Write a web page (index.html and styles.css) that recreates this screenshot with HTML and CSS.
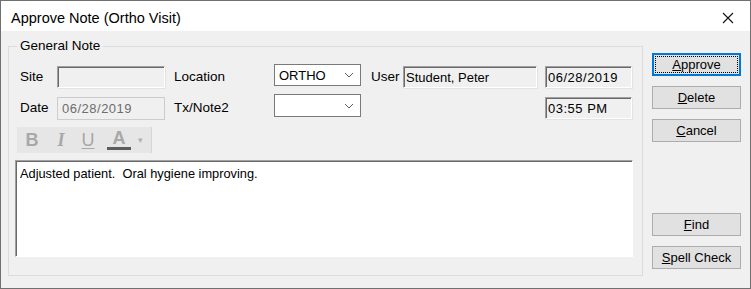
FILE: index.html
```html
<!DOCTYPE html>
<html lang="en">
<head>
    <meta charset="UTF-8">
    <title>Approve Note (Ortho Visit)</title>
    <link rel="stylesheet" href="styles.css">
</head>
<body>
    <div class="window">
        <div class="titlebar">
            <span class="title">Approve Note (Ortho Visit)</span>
            <svg class="close" width="12" height="12" viewBox="0 0 12 12">
                <path d="M1 1 L11 11 M11 1 L1 11" stroke="#111" stroke-width="1.1" fill="none"/>
            </svg>
        </div>
        <div class="client">
            <div class="group">
                <span class="group-title">General Note</span>

                <div class="row row1">
                    <span class="lbl lbl-first">Site</span>
                    <div class="field sunken f-left"></div>
                    <span class="lbl lbl-mid">Location</span>
                    <div class="combo"><span>ORTHO</span>
                        <svg width="10" height="6" viewBox="0 0 10 6"><path d="M1 1 L5 5 L9 1" stroke="#606060" fill="none"/></svg>
                    </div>
                    <span class="lbl lbl-user">User</span>
                    <div class="field sunken f-user">Student, Peter</div>
                    <div class="field sunken f-right f-num">06/28/2019</div>
                </div>

                <div class="row row2">
                    <span class="lbl lbl-first">Date</span>
                    <div class="field disabled f-left f-num">06/28/2019</div>
                    <span class="lbl lbl-mid">Tx/Note2</span>
                    <div class="combo"><span></span>
                        <svg width="10" height="6" viewBox="0 0 10 6"><path d="M1 1 L5 5 L9 1" stroke="#606060" fill="none"/></svg>
                    </div>
                    <span class="spacer"></span>
                    <div class="field sunken f-right f-time f-num">03:55 PM</div>
                </div>

                <div class="toolbar">
                    <span class="tb tb-b">B</span>
                    <span class="tb tb-i">I</span>
                    <span class="tb tb-u">U</span>
                    <span class="tb tb-a">A</span>
                    <span class="tb tb-drop">&#9662;</span>
                </div>

                <div class="editor">Adjusted patient.  Oral hygiene improving.</div>
            </div>

            <div class="buttons">
                <button class="btn focused"><u>A</u>pprove</button>
                <button class="btn"><u>D</u>elete</button>
                <button class="btn"><u>C</u>ancel</button>
                <div class="btn-gap"></div>
                <button class="btn"><u>F</u>ind</button>
                <button class="btn"><u>S</u>pell Check</button>
            </div>
        </div>
    </div>
</body>
</html>
```

FILE: styles.css
```css
* { box-sizing: border-box; }
body { margin: 0; font-family: "Liberation Sans", Arial, sans-serif; font-size: 13px; color: #000; background: #fff; }

.window { width: 751px; height: 289px; border: 1px solid #707070; display: flex; flex-direction: column; overflow: hidden; }
.titlebar { flex-shrink: 0; height: 30px; background: #fff; display: flex; align-items: center; padding: 3px 0 0 10px; }
.title { flex: 1; font-size: 14.5px; }
.close { margin-right: 16px; }

.client { flex: 1; min-height: 0; background: #f0f0f0; display: flex; align-items: flex-start; padding-left: 7px; }

.group { position: relative; width: 635px; height: 230px; margin-top: 15px; border: 1px solid #dcdcdc; padding: 17px 9px 0 6px; }
.group-title { position: absolute; top: -9px; left: 8px; padding: 0 3px; background: #f0f0f0; font-size: 13.5px; line-height: 16px; }

.row { display: flex; align-items: flex-start; margin-left: 5px; }
.row1 { height: 30px; }
.row2 { height: 33px; }

.lbl { line-height: 22px; white-space: nowrap; font-size: 13.5px; }
.row1 .lbl { margin-top: 2px; }
.row2 .lbl { margin-top: 3px; }
.lbl-first { width: 37px; }
.lbl-mid { width: 100px; margin-left: 9px; }
.lbl-user { width: 32px; margin-left: 10px; }
.spacer { width: 176px; }

.field { height: 22px; font-size: 13px; line-height: 19px; padding-left: 2px; white-space: nowrap; }
.f-num { letter-spacing: 0.5px; }
.row1 .field { margin-top: 2px; }
.row2 .field { margin-top: 3px; height: 23px; }
.sunken { background: #f0f0f0; border: 1px solid; border-color: #a0a0a0 #ffffff #ffffff #a0a0a0; box-shadow: inset 1px 1px 0 #696969, 1px 1px 0 #e3e3e3; padding-top: 1px; }
.disabled { background: #f0f0f0; border: 1px solid #cccccc; color: #6d6d6d; padding-left: 4px; line-height: 21px; }
.f-left { width: 108px; }
.f-user { width: 134px; }
.f-right { width: 87px; margin-left: 8px; }
.row2 .f-time { height: 22px; }

.combo { width: 87px; height: 22px; background: #fff; border: 1px solid #7a7a7a; display: flex; align-items: center; justify-content: space-between; padding: 0 6px 0 4px; font-size: 13px; }
.row2 .combo { height: 23px; }

.toolbar { width: 135px; height: 26px; margin-left: 2px; background: #e6e6e6; border-right: 1px solid #d6d6d6; display: flex; align-items: center; padding-left: 8px; }
.tb { color: #a8a8a8; font-size: 18px; line-height: 20px; text-align: center; }
.tb-b { width: 14px; font-weight: bold; }
.tb-i { width: 12px; margin-left: 16px; font-weight: bold; font-style: italic; font-family: "Liberation Serif", serif; }
.tb-u { width: 14px; margin-left: 14px; text-decoration: underline; text-underline-offset: 2px; }
.tb-a { width: 24px; margin-left: 12px; border-bottom: 3px solid #5c5c5c; line-height: 17px; font-weight: bold; }
.tb-drop { font-size: 9px; margin-left: 7px; color: #b0b0b0; }

.editor { margin-top: 7px; height: 97px; background: #fff; border: 1px solid; border-color: #a0a0a0 #ffffff #ffffff #a0a0a0; box-shadow: inset 1px 1px 0 #696969; padding: 5px 4px; font-size: 12.8px; white-space: pre; }

.buttons { width: 89px; margin-left: 9px; padding-top: 22px; display: flex; flex-direction: column; gap: 10px; }
.btn-gap { height: 51px; }
.btn { height: 23px; background: #e1e1e1; border: 1px solid #adadad; font-family: "Liberation Sans", Arial, sans-serif; font-size: 13px; color: #000; padding: 0; }
.btn.focused { border: 1px solid #0078d7; box-shadow: inset 0 0 0 1px #0078d7; outline: 1px dotted #000; outline-offset: -4px; }
```
